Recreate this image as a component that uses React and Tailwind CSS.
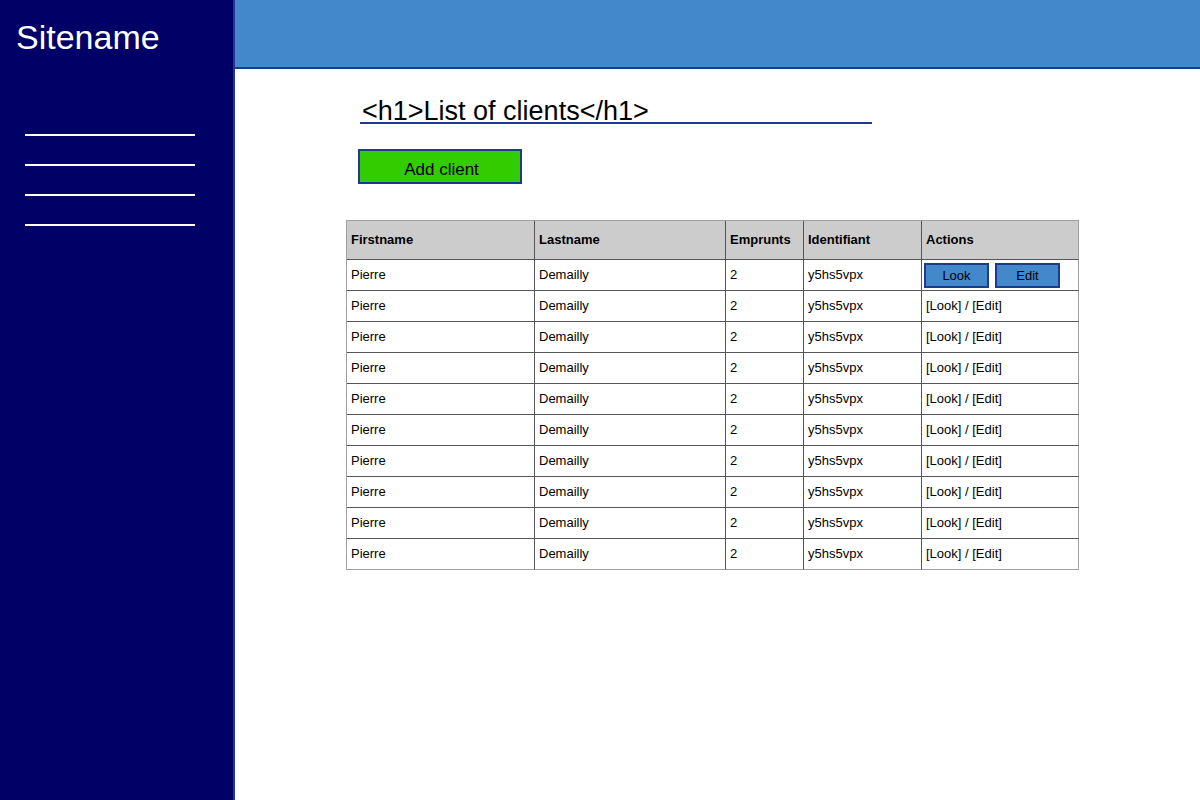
import React from "react";

const columns = [
  { key: "firstname", label: "Firstname", width: "w-[188px]" },
  { key: "lastname", label: "Lastname", width: "w-[191px]" },
  { key: "emprunts", label: "Emprunts", width: "w-[78px]" },
  { key: "identifiant", label: "Identifiant", width: "w-[118px]" },
  { key: "actions", label: "Actions", width: "w-[157px]" },
];

const clients = Array.from({ length: 10 }, (_, i) => ({
  id: i + 1,
  firstname: "Pierre",
  lastname: "Demailly",
  emprunts: 2,
  identifiant: "y5hs5vpx",
}));

const App = () => {
  return (
    <div
      className="flex min-h-[800px] w-full bg-white text-black"
      style={{ fontFamily: '"Liberation Sans", Arial, sans-serif' }}
    >
      {/* Sidebar */}
      <aside className="w-[235px] shrink-0 bg-[#000066] border-r-2 border-[#1f3a8a]">
        <div className="pl-[16px] pt-[20px] text-[34px] leading-[34px] text-white">Sitename</div>
        <nav className="mt-[80px] flex flex-col gap-[28px] pl-[25px]">
          {[1, 2, 3, 4].map((n) => (
            <div key={n} className="h-[2px] w-[170px] bg-white" />
          ))}
        </nav>
      </aside>

      {/* Main */}
      <main className="flex-1">
        <header className="h-[69px] bg-[#4488cc] border-b-2 border-[#1f3a8a]" />

        <div className="pl-[111px] pt-[29px]">
          <h1 className="ml-[14px] w-[512px] h-[26px] border-b-2 border-[#1f3a8a] pl-[2px] pt-[1px] text-[27px] leading-[24px]">
            &lt;h1&gt;List of clients&lt;/h1&gt;
          </h1>

          <button className="ml-[12px] mt-[25px] h-[35px] w-[164px] bg-[#33cc00] border-2 border-[#1f3a8a] text-[17px] leading-[31px] text-black pt-[3px] pl-[3px]">
            Add client
          </button>

          <table className="mt-[36px] border-separate border-spacing-0 text-[13px] border-l border-t border-[#a0a0a0]">
            <thead>
              <tr className="bg-[#cccccc] h-[39px]">
                {columns.map((c, i) => (
                  <th
                    key={c.key}
                    className={`${c.width} text-left font-bold pl-[4px] border-b ${
                      i === columns.length - 1 ? "border-r border-r-[#a0a0a0]" : "border-r"
                    } border-[#555555]`}
                  >
                    {c.label}
                  </th>
                ))}
              </tr>
            </thead>
            <tbody>
              {clients.map((client, idx) => (
                <tr key={client.id} className="h-[31px]">
                  {columns.map((c, i) => {
                    const last = i === columns.length - 1;
                    const bottom = idx === clients.length - 1 ? "border-b border-b-[#a0a0a0]" : "border-b";
                    return (
                      <td
                        key={c.key}
                        className={`pl-[4px] ${bottom} ${
                          last ? "border-r border-r-[#a0a0a0]" : "border-r"
                        } border-[#555555]`}
                      >
                        {c.key === "actions" ? (
                          idx === 0 ? (
                            <div className="flex gap-[6px] -ml-[2px]">
                              <button className="h-[25px] w-[65px] bg-[#4488cc] border-2 border-[#1f3a8a] text-[13px] pt-[1px]">
                                Look
                              </button>
                              <button className="h-[25px] w-[65px] bg-[#4488cc] border-2 border-[#1f3a8a] text-[13px] pt-[1px]">
                                Edit
                              </button>
                            </div>
                          ) : (
                            "[Look] / [Edit]"
                          )
                        ) : (
                          client[c.key]
                        )}
                      </td>
                    );
                  })}
                </tr>
              ))}
            </tbody>
          </table>
        </div>
      </main>
    </div>
  );
};

export default App;
